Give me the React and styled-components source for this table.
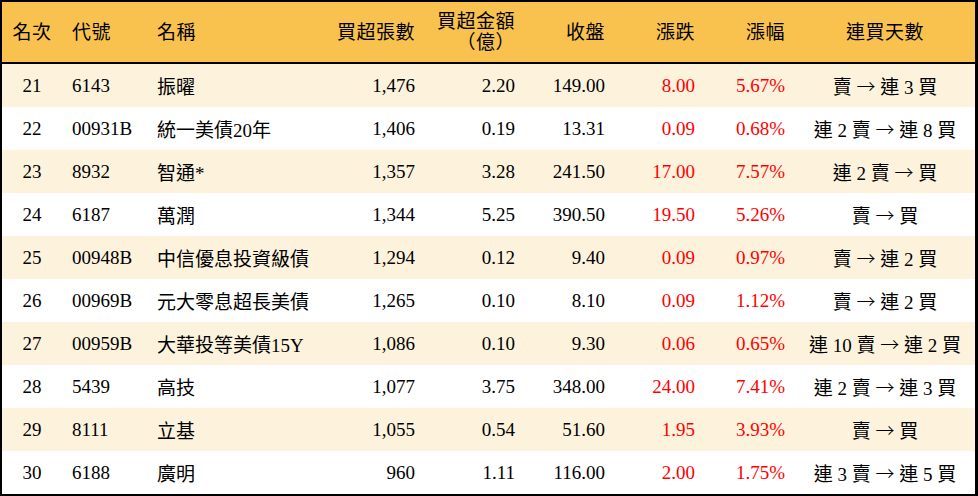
import React from "react"
import styled, { createGlobalStyle } from "styled-components"

const GlobalStyle = createGlobalStyle`
  html, body {
    margin: 0;
    padding: 0;
    background: #ffffff;
  }
  body {
    font-family: "Liberation Serif", "Noto Sans CJK TC", serif;
  }
`

const COLUMNS = "60px 85px 178px 100px 100px 90px 90px 90px 1fr"

const Table = styled.div`
  width: 978px;
  height: 496px;
  box-sizing: border-box;
  border: 2px solid #000;
  border-right-width: 3px;
  display: flex;
  flex-direction: column;
  color: #000;
  font-size: 19px;
`

const HeaderRow = styled.div`
  display: grid;
  grid-template-columns: ${COLUMNS};
  height: 60px;
  background-color: #f9c24f;
  border-bottom: 2px solid #000;
`

const HeadCell = styled.div`
  display: flex;
  align-items: center;
  justify-content: ${props =>
    props.align === "right" ? "flex-end" : props.align === "center" ? "center" : "flex-start"};
  text-align: ${props => props.align || "left"};
  padding: 0 10px;
  line-height: 21px;
  letter-spacing: 0.5px;
`

const Row = styled.div`
  display: grid;
  grid-template-columns: ${COLUMNS};
  height: 43px;
  background-color: ${props => (props.shaded ? "#fdf3dd" : "#ffffff")};
`

const Cell = styled.div`
  display: flex;
  align-items: center;
  justify-content: ${props =>
    props.align === "right" ? "flex-end" : props.align === "center" ? "center" : "flex-start"};
  padding: 0 10px;
  white-space: pre;
  color: ${props => (props.up ? "#ff0000" : "#000")};
`

const Arrow = styled.span`
  display: inline-block;
  font-family: "Noto Sans CJK TC", sans-serif;
  font-size: 19px;
  font-weight: 300;
`

const rows = [
  ["21", "6143", "振曜", "1,476", "2.20", "149.00", "8.00", "5.67%", "賣 → 連 3 買"],
  ["22", "00931B", "統一美債20年", "1,406", "0.19", "13.31", "0.09", "0.68%", "連 2 賣 → 連 8 買"],
  ["23", "8932", "智通*", "1,357", "3.28", "241.50", "17.00", "7.57%", "連 2 賣 → 買"],
  ["24", "6187", "萬潤", "1,344", "5.25", "390.50", "19.50", "5.26%", "賣 → 買"],
  ["25", "00948B", "中信優息投資級債", "1,294", "0.12", "9.40", "0.09", "0.97%", "賣 → 連 2 買"],
  ["26", "00969B", "元大零息超長美債", "1,265", "0.10", "8.10", "0.09", "1.12%", "賣 → 連 2 買"],
  ["27", "00959B", "大華投等美債15Y", "1,086", "0.10", "9.30", "0.06", "0.65%", "連 10 賣 → 連 2 買"],
  ["28", "5439", "高技", "1,077", "3.75", "348.00", "24.00", "7.41%", "連 2 賣 → 連 3 買"],
  ["29", "8111", "立基", "1,055", "0.54", "51.60", "1.95", "3.93%", "賣 → 買"],
  ["30", "6188", "廣明", "960", "1.11", "116.00", "2.00", "1.75%", "連 3 賣 → 連 5 買"],
]

const aligns = ["center", "left", "left", "right", "right", "right", "right", "right", "center"]

// keep the spaces on both sides of the arrow, only the glyph gets its own font
const Streak = ({ text }) => {
  const [from, to] = text.split("→")
  return (
    <>
      {from}
      <Arrow>→</Arrow>
      {to}
    </>
  )
}

export default function App() {
  return (
    <>
      <GlobalStyle />
      <Table>
        <HeaderRow>
          <HeadCell align="center">名次</HeadCell>
          <HeadCell>代號</HeadCell>
          <HeadCell>名稱</HeadCell>
          <HeadCell align="right">買超張數</HeadCell>
          <HeadCell align="right">
            買超金額
            <br />
            （億）
          </HeadCell>
          <HeadCell align="right">收盤</HeadCell>
          <HeadCell align="right">漲跌</HeadCell>
          <HeadCell align="right">漲幅</HeadCell>
          <HeadCell align="center">連買天數</HeadCell>
        </HeaderRow>
        {rows.map((row, i) => (
          <Row key={row[0]} shaded={i % 2 === 0}>
            {row.map((value, j) => (
              <Cell key={j} align={aligns[j]} up={j === 6 || j === 7}>
                {j === 8 ? <Streak text={value} /> : value}
              </Cell>
            ))}
          </Row>
        ))}
      </Table>
    </>
  )
}
